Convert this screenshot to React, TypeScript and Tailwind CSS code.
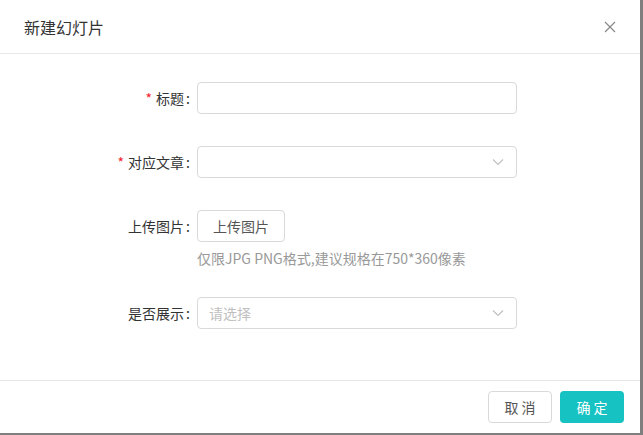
import React from 'react';

const font = { fontFamily: '"Noto Sans CJK SC", "Noto Sans", sans-serif' };

function Chevron() {
  return (
    <svg width="12" height="8" viewBox="0 0 12 8" fill="none" stroke="#bfbfbf" strokeWidth="1.1">
      <path d="M1 1.5l5 5 5-5" />
    </svg>
  );
}

function Label({ text, required }: { text: string; required?: boolean }) {
  return (
    <div className="w-[197px] shrink-0 pr-[7px] text-right text-[14px] text-[#333]">
      {required && <span className="mr-[4px] text-[#f5222d]">*</span>}
      {text}
      <span className="ml-[2px]">:</span>
    </div>
  );
}

export default function App() {
  return (
    <div className="h-[435px] w-[643px] bg-[#7f7f7f]" style={font}>
      <div className="flex h-[433px] w-[640px] flex-col bg-white">
        {/* header */}
        <div className="flex h-[54px] shrink-0 items-center justify-between border-b border-[#e8e8e8] pl-[24px] pr-[24px]">
          <span className="text-[16px] text-[#333]">新建幻灯片</span>
          <svg width="12" height="12" viewBox="0 0 12 12" stroke="#888" strokeWidth="1.2">
            <path d="M1 1l10 10M11 1L1 11" />
          </svg>
        </div>

        {/* body */}
        <div className="flex-1 pt-[28px]">
          <div className="flex h-[32px] items-center">
            <Label text="标题" required />
            <div className="h-[32px] w-[320px] rounded-[4px] border border-[#d9d9d9]" />
          </div>

          <div className="mt-[32px] flex h-[32px] items-center">
            <Label text="对应文章" required />
            <div className="flex h-[32px] w-[320px] items-center justify-end rounded-[4px] border border-[#d9d9d9] pr-[12px]">
              <Chevron />
            </div>
          </div>

          <div className="mt-[32px] flex h-[32px] items-center">
            <Label text="上传图片" />
            <button className="h-[32px] w-[88px] rounded-[4px] border border-[#d9d9d9] bg-white text-[14px] text-[#555]">
              上传图片
            </button>
          </div>
          <div className="ml-[197px] mt-[5px] text-[14px] leading-[22px] text-[#999]">
            仅限JPG PNG格式,建议规格在750*360像素
          </div>

          <div className="mt-[28px] flex h-[32px] items-center">
            <Label text="是否展示" />
            <div className="flex h-[32px] w-[320px] items-center justify-between rounded-[4px] border border-[#d9d9d9] pl-[11px] pr-[12px]">
              <span className="text-[14px] text-[#bfbfbf]">请选择</span>
              <Chevron />
            </div>
          </div>
        </div>

        {/* footer */}
        <div className="flex h-[53px] shrink-0 items-center justify-end gap-[8px] border-t border-[#e8e8e8] pr-[16px]">
          <button className="h-[32px] w-[64px] rounded-[4px] border border-[#d9d9d9] bg-white text-[14px] text-[#555]">
            取 消
          </button>
          <button className="h-[32px] w-[64px] rounded-[4px] bg-[#16c2c2] text-[14px] text-white">
            确 定
          </button>
        </div>
      </div>
    </div>
  );
}
